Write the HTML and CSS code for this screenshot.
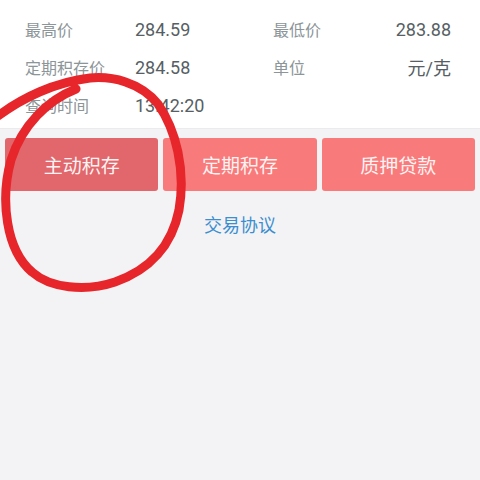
FILE: index.html
```html
<!DOCTYPE html>
<html lang="zh">
<head>
<meta charset="utf-8">
<link rel="stylesheet" href="styles.css">
</head>
<body>
<div class="page">
  <section class="info">
    <div class="row">
      <div class="cell"><span class="label">最高价</span><span class="value">284.59</span></div>
      <div class="cell right"><span class="label">最低价</span><span class="value">283.88</span></div>
    </div>
    <div class="row">
      <div class="cell"><span class="label">定期积存价</span><span class="value">284.58</span></div>
      <div class="cell right"><span class="label">单位</span><span class="value">元/克</span></div>
    </div>
    <div class="row">
      <div class="cell"><span class="label">查询时间</span><span class="value">13:42:20</span></div>
      <div class="cell right"></div>
    </div>
  </section>
  <div class="actions">
    <button class="btn active">主动积存</button>
    <button class="btn">定期积存</button>
    <button class="btn">质押贷款</button>
  </div>
  <div class="agreement">交易协议</div>
  <svg class="mark" width="480" height="480" viewBox="0 0 480 480">
    <path d="M76,89 C48,100 22,125 11,160 C0,200 6,250 32,272 C50,288 85,292 115,282 C150,270 172,245 179,210 C186,170 176,130 158,104 C140,82 112,76 90,78 C55,82 22,98 -2,116" fill="none" stroke="#e6262b" stroke-width="9" stroke-linecap="round"/>
  </svg>
</div>
</body>
</html>
```
FILE: styles.css
```css
html, body {
  margin: 0;
  padding: 0;
}
body {
  background: #f3f3f5;
  font-family: Roboto, "Noto Sans CJK SC", sans-serif;
  width: 480px;
  height: 480px;
  overflow: hidden;
}
.page {
  position: relative;
  width: 480px;
  height: 480px;
}
.info {
  background: #ffffff;
  padding: 10px 0 4px;
  border-bottom: 1px solid #ebebee;
}
.row {
  display: grid;
  grid-template-columns: 1fr 1fr;
  height: 38px;
  align-items: center;
}
.cell {
  display: flex;
  align-items: center;
  padding-left: 25px;
}
.cell.right {
  padding-left: 33px;
  padding-right: 29px;
  justify-content: space-between;
}
.label {
  font-family: "Noto Sans CJK SC", sans-serif;
  font-size: 16px;
  color: #8c9598;
  width: 110px;
}
.cell.right .label {
  width: auto;
}
.value {
  font-size: 18px;
  color: #566064;
}
.actions {
  display: grid;
  grid-template-columns: 1fr 1fr 1fr;
  gap: 5px;
  padding: 9px 5px 0;
}
.btn {
  height: 53px;
  border: none;
  border-radius: 3px;
  background: #f97a7a;
  color: #fff3f3;
  font-family: "Noto Sans CJK SC", sans-serif;
  font-size: 19px;
  padding: 0;
}
.btn.active {
  background: #e1676c;
}
.agreement {
  text-align: center;
  font-family: "Noto Sans CJK SC", sans-serif;
  font-size: 18px;
  color: #3b8ecf;
  margin-top: 20px;
}
.mark {
  position: absolute;
  left: 0;
  top: 0;
  pointer-events: none;
}
```
